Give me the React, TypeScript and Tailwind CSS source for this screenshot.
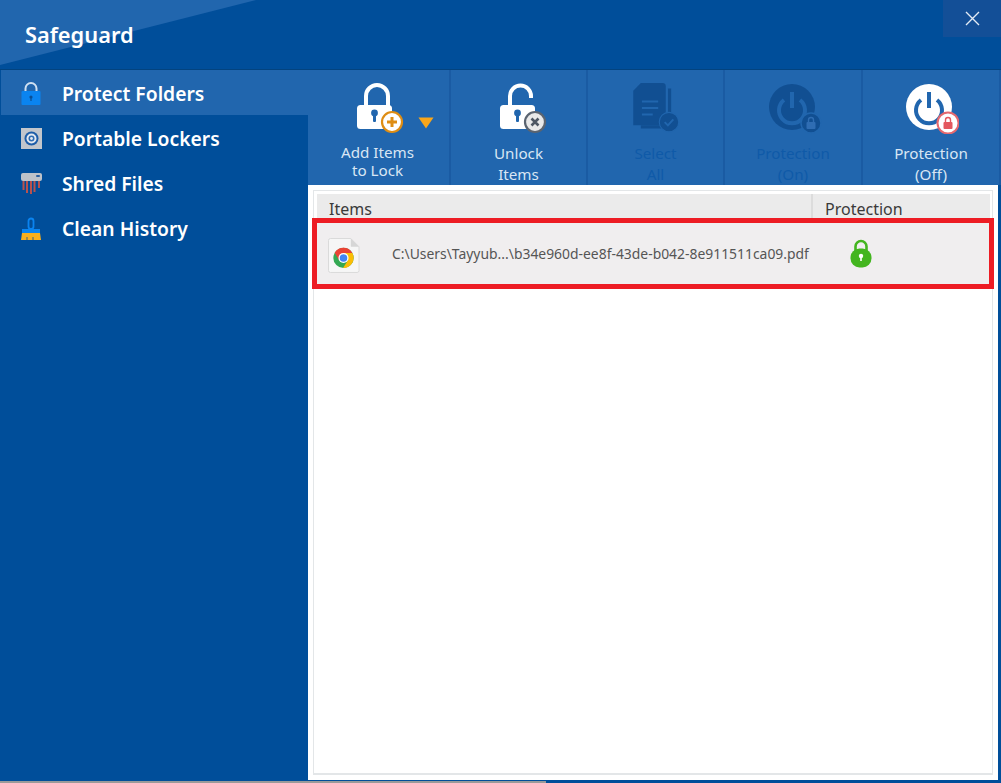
import React from "react";

const font = { fontFamily: '"Noto Sans", "Open Sans", sans-serif' };

function SideLock() {
  return (
    <svg width="20" height="24" viewBox="0 0 20 24">
      <path d="M4.500 11V6.500a5.500 5.500 0 0 1 11 0V11" fill="none" stroke="#cfe0f2" strokeWidth="2" />
      <rect x="0.500" y="9" width="19" height="14" rx="1" fill="#0a84f0" />
      <circle cx="10" cy="15" r="1.600" fill="#0b4f94" />
      <rect x="9.400" y="15" width="1.200" height="4" fill="#0b4f94" />
    </svg>
  );
}
function SideSafe() {
  return (
    <svg width="21" height="21" viewBox="0 0 21 21">
      <rect width="21" height="21" fill="#c2c6cc" />
      <circle cx="10.500" cy="10.500" r="7" fill="#1d5da8" />
      <circle cx="10.500" cy="10.500" r="5" fill="#e4e9f0" />
      <circle cx="10.500" cy="10.500" r="3" fill="#2f6db3" />
      <circle cx="10.500" cy="10.500" r="1.400" fill="#e4e9f0" />
    </svg>
  );
}
function SideShred() {
  return (
    <svg width="21" height="21" viewBox="0 0 21 21">
      <rect x="0" y="0" width="21" height="8" rx="2" fill="#bdc2c9" />
      <rect x="15" y="2" width="4" height="2" rx="1" fill="#2a5f9f" />
      <g fill="#b8524f">
        <rect x="1.500" y="8" width="2" height="9" />
        <rect x="5" y="8" width="2" height="12" />
        <rect x="9" y="8" width="2" height="13" />
        <rect x="12.500" y="8" width="2" height="11" />
        <rect x="17" y="8" width="2" height="7" />
      </g>
    </svg>
  );
}
function SideBrush() {
  return (
    <svg width="20" height="24" viewBox="0 0 20 24">
      <path d="M10 1.500a2.500 2.500 0 0 1 2.500 2.500v5.500a2.500 2.500 0 0 1-5 0V4A2.500 2.500 0 0 1 10 1.500z" fill="none" stroke="#0a84f0" strokeWidth="1.800" />
      <rect x="1" y="12" width="18" height="4" fill="#0a84f0" />
      <path d="M1 16h18l1 7H0z" fill="#f8b01e" />
      <path d="M6 23v-3M12 23v-3" stroke="#0b4f94" strokeWidth="0.800" />
    </svg>
  );
}

function BigLock({ open, badge }: { open?: boolean; badge: React.ReactNode }) {
  return (
    <svg width="58" height="56" viewBox="0 0 58 56">
      <path
        d={open ? "M12 24V14a10.500 10.500 0 0 1 21 0v2" : "M11 24V14a11 11 0 0 1 22 0v10"}
        fill="none"
        stroke="#fff"
        strokeWidth="4"
      />
      <rect x="2" y="23" width="35" height="24" rx="3.500" fill="#fff" />
      <circle cx="19.500" cy="31" r="3.400" fill="#2166ae" />
      <rect x="18" y="32" width="3" height="8" rx="1" fill="#2166ae" />
      {badge}
    </svg>
  );
}

function Tool({
  l1,
  l2,
  icon,
  disabled,
  w,
  shift,
}: {
  l1: string;
  l2: string;
  icon: React.ReactNode;
  disabled?: boolean;
  w: string;
  shift: string;
}) {
  return (
    <div className={`${w} h-full shrink-0 flex flex-col items-center border-r-2 border-[#1a5ba3] pt-[12px]`}>
      <div className={`h-[62px] flex items-start justify-center ${shift}`}>{icon}</div>
      <div className={`text-[15.2px] leading-[21px] text-center ${disabled ? "text-[#0f5aa8]" : "text-[#d9e6f4]"}`}>
        <div>{l1}</div>
        <div>{l2}</div>
      </div>
    </div>
  );
}

function Side({ icon, label, active }: { icon: React.ReactNode; label: string; active?: boolean }) {
  return (
    <div className={`h-[45px] pt-[2px] flex items-center ${active ? "bg-[#2166ae] ml-px" : ""}`}>
      <div className={`${active ? "w-[61px] pl-[20px]" : "w-[62px] pl-[21px]"} flex items-center shrink-0`}>{icon}</div>
      <span className="text-[19.3px] font-semibold text-white leading-none">{label}</span>
    </div>
  );
}

export default function App() {
  return (
    <div style={font} className="relative w-[1001px] h-[783px] bg-[#004e9a] overflow-hidden flex flex-col">
      <div className="relative h-[70px] shrink-0 border-b border-[#03437f] flex items-start justify-between">
        <svg className="absolute left-0 top-0" width="256" height="66" viewBox="0 0 256 66">
          <path d="M0 0H256L0 65z" fill="#2166ae" />
        </svg>
        <div className="relative pl-[25px] pt-[20px] text-[21.8px] leading-[30px] font-semibold text-white">Safeguard</div>
        <div className="relative w-[58px] h-[37px] bg-[#134f97] flex items-center justify-center">
          <svg width="15" height="15" viewBox="0 0 15 15">
            <path d="M1 1l13 13M14 1L1 14" stroke="#e3ebf5" strokeWidth="1.400" />
          </svg>
        </div>
      </div>

      <div className="flex flex-1 min-h-0">
        <div className="w-[308px] shrink-0 flex flex-col">
          <Side active icon={<SideLock />} label="Protect Folders" />
          <Side icon={<SideSafe />} label="Portable Lockers" />
          <Side icon={<SideShred />} label="Shred Files" />
          <Side icon={<SideBrush />} label="Clean History" />
        </div>

        <div className="flex-1 min-w-0 flex flex-col pb-[3px]">
          <div className="h-[115px] shrink-0 bg-[#2166ae] flex overflow-hidden">
            <div className="w-[143px] shrink-0 h-full relative flex flex-col items-center border-r-2 border-[#1a5ba3] pt-[12px]">
              <div className="h-[61px] w-full pl-[47px]">
                <BigLock
                  badge={
                    <g>
                      <circle cx="37" cy="40" r="10" fill="#fff" stroke="#de8d14" strokeWidth="2.200" />
                      <path d="M32 40h10M37 35v10" stroke="#de8d14" strokeWidth="3" />
                    </g>
                  }
                />
              </div>
              <svg className="absolute left-[110px] top-[47px]" width="16" height="12" viewBox="0 0 16 12">
                <path d="M0.500 0.500h15L8 11.500z" fill="#f9a61a" />
              </svg>
              <div className="text-[15.2px] leading-[18px] text-center text-[#d9e6f4] pr-[2px]">
                <div>Add Items</div>
                <div>to Lock</div>
              </div>
            </div>
            <Tool
              w="w-[137px]"
              shift="pl-[16px]"
              l1="Unlock"
              l2="Items"
              icon={
                <BigLock
                  open
                  badge={
                    <g>
                      <circle cx="37" cy="40" r="10" fill="#e9e9e9" stroke="#5b6470" strokeWidth="2.200" />
                      <path d="M33.500 36.500l7 7M40.500 36.500l-7 7" stroke="#4e5763" strokeWidth="2.600" />
                    </g>
                  }
                />
              }
            />
            <Tool
              w="w-[137px]"
              shift="pl-[1px]"
              disabled
              l1="Select"
              l2="All"
              icon={
                <svg width="48" height="52" viewBox="0 0 44 48">
                  <path d="M8 1h20a3 3 0 0 1 3 3v36H1V8z" fill="#114f92" />
                  <path d="M33 6h3v37H8v-3h25z" fill="#114f92" />
                  <path d="M9 18h15M9 24h15M9 30h10" stroke="#2166ae" strokeWidth="2" />
                  <circle cx="34" cy="37" r="9" fill="#114f92" stroke="#2166ae" strokeWidth="1" />
                  <path d="M30 37l3 3 5-5.500" fill="none" stroke="#2166ae" strokeWidth="1.800" />
                </svg>
              }
            />
            <Tool
              w="w-[138px]"
              shift="pl-[3px]"
              disabled
              l1="Protection"
              l2="(On)"
              icon={
                <svg width="54" height="52" viewBox="0 0 54 52">
                  <circle cx="24" cy="25" r="23" fill="#114f92" />
                  <path d="M16 18a13 13 0 1 0 16 0" fill="none" stroke="#2166ae" strokeWidth="4" />
                  <path d="M24 10v16" stroke="#2166ae" strokeWidth="4" />
                  <circle cx="43" cy="41" r="10" fill="#114f92" stroke="#2166ae" strokeWidth="1.500" />
                  <rect x="38.500" y="40" width="9" height="7" rx="1" fill="#2f6db3" />
                  <path d="M40.500 40v-2a2.500 2.500 0 0 1 5 0v2" fill="none" stroke="#2f6db3" strokeWidth="1.400" />
                </svg>
              }
            />
            <Tool
              w="w-[138px]"
              shift="pl-[1px]"
              l1="Protection"
              l2="(Off)"
              icon={
                <svg width="54" height="52" viewBox="0 0 54 52">
                  <circle cx="24" cy="25" r="23" fill="#fff" />
                  <path d="M16 18a13 13 0 1 0 16 0" fill="none" stroke="#2166ae" strokeWidth="4" />
                  <path d="M24 10v16" stroke="#2166ae" strokeWidth="4" />
                  <circle cx="43" cy="41" r="10.500" fill="#fff" stroke="#e4696f" strokeWidth="2" />
                  <rect x="38.500" y="40" width="9" height="7" rx="1" fill="#e4575e" />
                  <path d="M40.500 40v-2a2.500 2.500 0 0 1 5 0v2" fill="none" stroke="#e4575e" strokeWidth="1.400" />
                </svg>
              }
            />
          </div>

          <div className="flex-1 min-h-0 bg-white mr-[3px] p-[5px]">
            <div className="h-full border border-[#e3e6e8] border-b-2 px-[3px] pt-[3px] relative">
              <div className="h-[24px] bg-[#ebebeb] flex text-[16px] leading-[24px] text-[#3a3a3a] -mr-px">
                <div className="w-[496px] pl-[12px] border-r-2 border-[#dcdcdc] pt-[3px]">Items</div>
                <div className="pl-[12px] pt-[3px]">Protection</div>
              </div>
              <div className="h-[71px] -ml-[5px] -mr-[5px] border-[5px] border-[#ed1c24] bg-[#f0eeef] flex items-center">
                <div className="w-[75px] pl-[11px] shrink-0 pt-[3px]">
                  <svg width="32" height="37" viewBox="0 0 33 37">
                    <path d="M2.500 1h21L32 9.500V34a2 2 0 0 1-2 2H2.500a2 2 0 0 1-2-2V3a2 2 0 0 1 2-2z" fill="#f6f6f6" stroke="#d9d9d9" />
                    <path d="M23.500 1v8.500H32z" fill="#d6d6d6" />
                    <circle cx="16" cy="21" r="10.500" fill="#34a853" />
                    <path d="M16 10.500A10.500 10.500 0 0 0 6.900 15.750L11.500 23.500 16 16h9.100A10.500 10.500 0 0 0 16 10.500z" fill="#ea4335" />
                    <path d="M25.100 16H16l4.600 7.500-5.100 8A10.500 10.500 0 0 0 25.100 16z" fill="#fbbc05" />
                    <circle cx="16" cy="21" r="5.200" fill="#fff" />
                    <circle cx="16" cy="21" r="3.900" fill="#4285f4" />
                  </svg>
                </div>
                <div className="w-[423px] shrink-0 text-[13.9px] text-[#555555] whitespace-nowrap pt-[2px]">
                  {"C:\\Users\\Tayyub...\\b34e960d-ee8f-43de-b042-8e911511ca09.pdf"}
                </div>
                <div className="pl-[35px]">
                  <svg width="22" height="29" viewBox="0 0 22 29">
                    <path d="M5.500 12V7.500a5.500 5.500 0 0 1 11 0V12" fill="none" stroke="#43b51f" strokeWidth="2.600" />
                    <rect x="0.500" y="9.500" width="21" height="19" rx="9" fill="#43b51f" />
                    <circle cx="11" cy="17" r="2.200" fill="#fff" />
                    <rect x="10.200" y="17" width="1.600" height="5" fill="#fff" />
                  </svg>
                </div>
              </div>
            </div>
          </div>
        </div>
      </div>
      <div className="absolute left-0 bottom-0 h-[2px] w-[546px] bg-[#9a9a9a]" />
    </div>
  );
}
